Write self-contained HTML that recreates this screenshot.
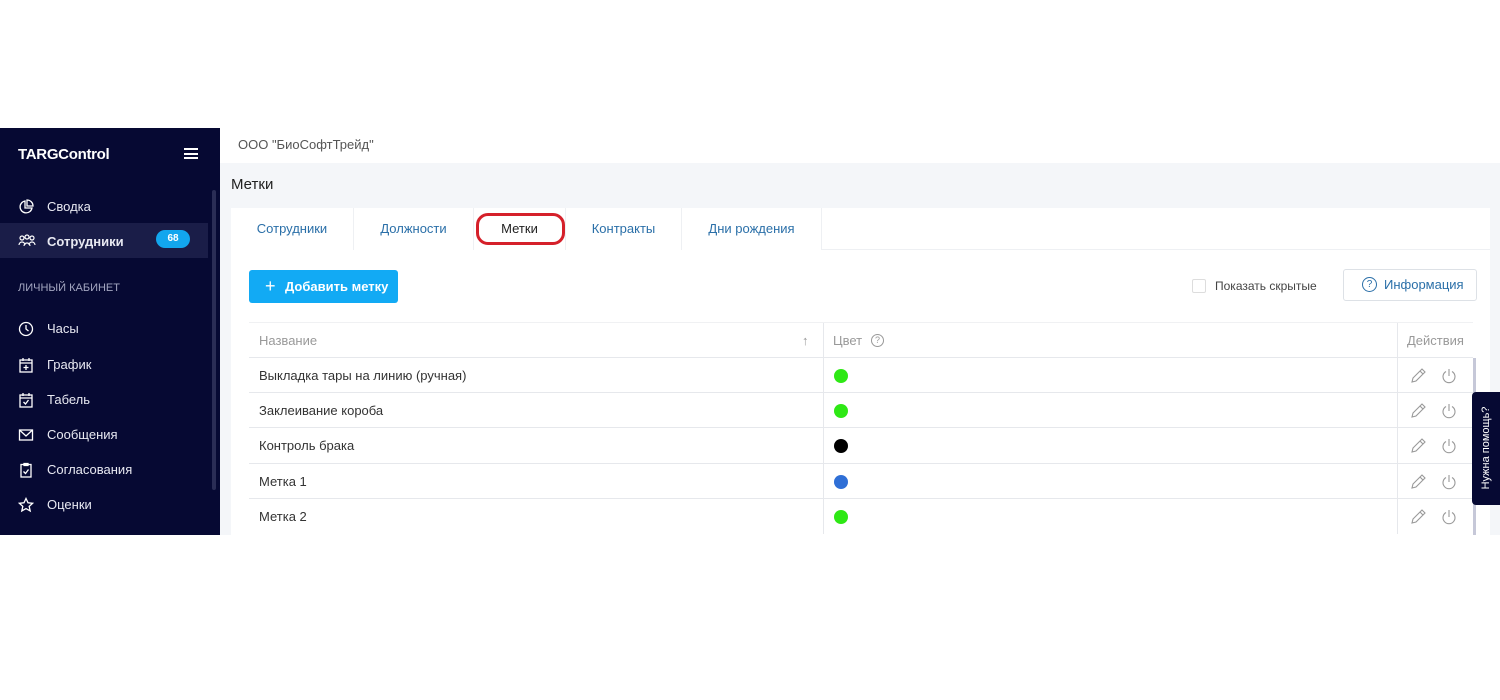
<!DOCTYPE html>
<html><head><meta charset="utf-8"><style>
*{box-sizing:border-box;margin:0;padding:0}
body{width:1500px;height:700px;background:#fff;font-family:"Liberation Sans",sans-serif;position:relative;overflow:hidden;color:#333}
.abs{position:absolute}
.sb{left:0;top:128px;width:220px;height:407px;background:#060933;color:#fff}
.sb .logo{position:absolute;left:18px;top:18px;font-weight:bold;font-size:15px;letter-spacing:-0.3px}
.sb .item{position:absolute;left:0;width:208px;height:35px;font-size:13px;color:#e8e9f2}
.sb .item span{position:absolute;left:47px;top:10px}
.sb .item svg{position:absolute;left:18px;top:10px}
.main{left:220px;top:128px;width:1280px;height:407px;background:#f4f6f9}
.row{position:absolute;left:249px;width:1224px;height:35px;border-top:1px solid #e6e8ec;background:#fff;font-size:13px}
.row .n{position:absolute;left:10px;top:10px;color:#333}
.row .d{position:absolute;left:585px;top:11px;width:14px;height:14px;border-radius:50%}
.row .v1{position:absolute;left:574px;top:0;height:35px;border-left:1px solid #e6e8ec}
.row .v2{position:absolute;left:1148px;top:0;height:35px;border-left:1px solid #e6e8ec}
.row .ic{position:absolute;left:1161px;top:9px}
.tab{position:absolute;top:208px;height:42px;background:#fff;font-size:13px;color:#2a6fa8;text-align:center;line-height:42px;border-right:1px solid #eef0f3}
</style></head><body>
<div class="abs sb">
 <div class="logo">TARGControl</div>
 <div class="abs" style="left:184px;top:20px;width:14px;height:11px;border-top:2px solid #fff;border-bottom:2px solid #fff"><div style="margin-top:2.5px;border-top:2px solid #fff"></div></div>
 <div class="abs" style="left:212px;top:62px;width:4px;height:300px;background:#2a2d55;border-radius:2px"></div>
 <div class="item" style="top:61px"><svg width="16" height="16" viewBox="0 0 16 16" fill="none" stroke="#fff" stroke-width="1.3"><path d="M7 2a6 6 0 1 0 7 7H7z"/><path d="M9 1v6h6a6 6 0 0 0-6-6z"/></svg><span>Сводка</span></div>
 <div class="item" style="top:95px;background:#1a1d48"><svg width="18" height="16" viewBox="0 0 18 16" fill="none" stroke="#fff" stroke-width="1.2"><circle cx="4" cy="5" r="2"/><circle cx="9" cy="4" r="2"/><circle cx="14" cy="5" r="2"/><path d="M1 12a3 3 0 0 1 6 0M6 13a3 3 0 0 1 6 0M11 12a3 3 0 0 1 6 0"/></svg><span style="font-weight:bold;top:11px">Сотрудники</span>
  <div class="abs" style="left:156px;top:7px;width:34px;height:18px;border-radius:9px;background:#12a6ee;font-size:10px;font-weight:bold;text-align:center;line-height:18px;color:#fff">68</div></div>
 <div class="abs" style="left:18px;top:154px;font-size:11px;color:#a3a6c0">ЛИЧНЫЙ КАБИНЕТ</div>
 <div class="item" style="top:183px"><svg width="16" height="16" viewBox="0 0 16 16" fill="none" stroke="#fff" stroke-width="1.3"><circle cx="8" cy="8" r="6.5"/><path d="M8 4v4l2.5 2"/></svg><span>Часы</span></div>
 <div class="item" style="top:219px"><svg width="16" height="16" viewBox="0 0 16 16" fill="none" stroke="#fff" stroke-width="1.3"><rect x="2" y="3" width="12" height="12"/><path d="M5 1v3M11 1v3M2 6h12M8 8v5M5.5 10.5h5"/></svg><span>График</span></div>
 <div class="item" style="top:254px"><svg width="16" height="16" viewBox="0 0 16 16" fill="none" stroke="#fff" stroke-width="1.3"><rect x="2" y="3" width="12" height="12"/><path d="M5 1v3M11 1v3M2 6h12M5.5 10l2 2 3-4"/></svg><span>Табель</span></div>
 <div class="item" style="top:289px"><svg width="16" height="16" viewBox="0 0 16 16" fill="none" stroke="#fff" stroke-width="1.3"><rect x="1.5" y="3" width="13" height="10"/><path d="M1.5 3l6.5 6 6.5-6"/></svg><span>Сообщения</span></div>
 <div class="item" style="top:324px"><svg width="16" height="16" viewBox="0 0 16 16" fill="none" stroke="#fff" stroke-width="1.3"><rect x="3" y="2.5" width="10" height="12.5"/><path d="M6 1.5h4v2H6zM5.5 9.5l2 2 3-4"/></svg><span>Согласования</span></div>
 <div class="item" style="top:359px"><svg width="16" height="16" viewBox="0 0 16 16" fill="none" stroke="#fff" stroke-width="1.3"><path d="M8 1.5l2 4.3 4.6.5-3.4 3.1 1 4.6L8 11.6 3.8 14l1-4.6L1.4 6.3 6 5.8z"/></svg><span>Оценки</span></div>
</div>
<div class="abs main"></div>
<div class="abs" style="left:220px;top:128px;width:1280px;height:35px;background:#fff"></div>
<div class="abs" style="left:238px;top:137px;font-size:13px;color:#555">ООО "БиоСофтТрейд"</div>
<div class="abs" style="left:231px;top:176px;font-size:15px;color:#222">Метки</div>
<div class="abs" style="left:231px;top:250px;width:1259px;height:285px;background:#fff"></div>
<div class="tab" style="left:231px;width:123px">Сотрудники</div>
<div class="tab" style="left:354px;width:120px">Должности</div>
<div class="tab" style="left:474px;width:92px;color:#222">Метки</div>
<div class="abs" style="left:476px;top:213px;width:89px;height:32px;border:3px solid #d5202a;border-radius:12px"></div>
<div class="tab" style="left:566px;width:116px">Контракты</div>
<div class="tab" style="left:682px;width:140px">Дни рождения</div>
<div class="abs" style="left:822px;top:208px;width:668px;height:42px;background:#fff;border-bottom:1px solid #eef0f3"></div>
<div class="abs" style="left:249px;top:270px;width:149px;height:33px;background:#12aaf4;border-radius:3px;color:#fff;font-size:13px;font-weight:bold;line-height:33px"><span style="position:absolute;left:16px;font-size:18px;font-weight:normal">+</span><span style="position:absolute;left:36px">Добавить метку</span></div>
<div class="abs" style="left:1192px;top:279px;width:14px;height:14px;border:1px solid #ddd;border-radius:2px"></div>
<div class="abs" style="left:1215px;top:279px;font-size:12px;color:#444">Показать скрытые</div>
<div class="abs" style="left:1343px;top:269px;width:134px;height:32px;border:1px solid #dde1e6;border-radius:3px;font-size:13px;color:#2a6fa8;line-height:30px"><span style="position:absolute;left:18px;top:7px;width:15px;height:15px;border:1px solid #2a6fa8;border-radius:50%;font-size:10px;line-height:13px;text-align:center">?</span><span style="position:absolute;left:40px">Информация</span></div>
<div class="row" style="top:322px;border-top:1px solid #f0f1f3"><span class="n" style="color:#999">Название</span><span class="abs" style="left:553px;top:10px;color:#999">↑</span><div class="v1"></div><span class="abs" style="left:584px;top:10px;color:#999">Цвет</span><span class="abs" style="left:622px;top:11px;width:13px;height:13px;border:1px solid #999;border-radius:50%;font-size:9px;line-height:11px;text-align:center;color:#999">?</span><div class="v2"></div><span class="abs" style="left:1158px;top:10px;color:#999">Действия</span></div>
<div id="rows"></div>
<div class="abs" style="left:1473px;top:358px;width:3px;height:177px;background:#c6c8d8"></div>
<div class="abs" style="left:1472px;top:392px;width:28px;height:113px;background:#060933;border-radius:4px 0 0 4px"><div style="position:absolute;left:14px;top:56px;transform:translate(-50%,-50%) rotate(-90deg);white-space:nowrap;color:#fff;font-size:11px">Нужна помощь?</div></div>
<script>
var d=[["Выкладка тары на линию (ручная)","#2ee815"],["Заклеивание короба","#2ee815"],["Контроль брака","#000"],["Метка 1","#2f6fd6"],["Метка 2","#2ee815"]];
var h="";d.forEach(function(r,i){h+='<div class="row" style="top:'+(357+i*35.2)+'px"><span class="n">'+r[0]+'</span><div class="v1"></div><div class="d" style="background:'+r[1]+'"></div><div class="v2"></div><svg class="ic" width="60" height="17" viewBox="0 0 60 17" fill="none" stroke="#999" stroke-width="1.1"><path d="M2 15l1-4 9-9 3 3-9 9z M10 4l3 3"/><path d="M36 4.5a6 6 0 1 0 6 0M39 2v7"/></svg></div>'});
document.getElementById("rows").innerHTML=h;
</script>
</body></html>
